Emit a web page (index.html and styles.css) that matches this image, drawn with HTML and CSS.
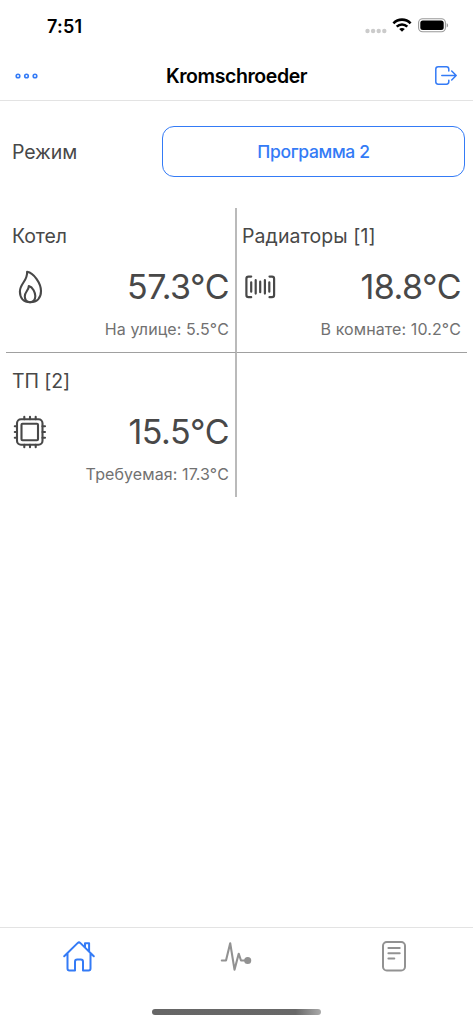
FILE: index.html
```html
<!DOCTYPE html>
<html lang="ru">
<head>
<meta charset="utf-8">
<title>Kromschroeder</title>
<link rel="stylesheet" href="styles.css">
</head>
<body>
<div class="app">
  <div class="status">
    <span class="time">7:51</span>
    <div class="indicators">
      <svg class="signal" width="22" height="6" viewBox="0 0 22 6" fill="#cbcbcb"><circle cx="2.5" cy="3" r="2.2"/><circle cx="8.1" cy="3" r="2.2"/><circle cx="13.7" cy="3" r="2.2"/><circle cx="19.3" cy="3" r="2.2"/></svg>
      <svg class="wifi" width="20" height="14" viewBox="0 0 20 14" fill="none" stroke="#000" stroke-width="2.6"><path d="M1.4 5.3C6.2.4 13.8.4 18.6 5.3"/><path d="M4.7 8.6C7.7 5.7 12.3 5.7 15.3 8.6"/><path d="M7.2 11C8.8 9.5 11.2 9.5 12.8 11L10 13.7Z" fill="#000" stroke="none"/></svg>
      <svg class="battery" width="31" height="15" viewBox="0 0 31 15"><rect x=".6" y=".8" width="26.8" height="13" rx="4" fill="none" stroke="#999" stroke-width="1.1"/><rect x="2.3" y="2.5" width="23.4" height="9.6" rx="2.5"/><path d="M28.7 5C30.5 5.8 30.5 8.8 28.7 9.6Z" fill="#999"/></svg>
    </div>
  </div>
  <header class="nav">
    <svg class="more" width="24" height="8" viewBox="0 0 24 8" fill="none" stroke="#347bf6" stroke-width="1.6"><circle cx="3" cy="4" r="1.8"/><circle cx="11.5" cy="4" r="1.8"/><circle cx="20" cy="4" r="1.8"/></svg>
    <h1 class="title">Kromschroeder</h1>
    <svg class="exit" width="24" height="22" viewBox="0 0 24 22" fill="none" stroke="#347bf6" stroke-width="1.5" stroke-linecap="round" stroke-linejoin="round"><path d="M14.8 6V4.2Q14.8 1.8 12.4 1.8H4.2Q1.8 1.8 1.8 4.2V16.8Q1.8 19.2 4.2 19.2H12.4Q14.8 19.2 14.8 16.8V15.2M7.8 10.5H22.2M17.7 6L22.2 10.5L17.7 15"/></svg>
  </header>
  <main class="content">
    <div class="mode">
      <span class="label">Режим</span>
      <button class="program"><span>Программа 2</span></button>
    </div>
    <div class="grid">
      <section class="cell right-line bottom-line">
        <h2 class="label">Котел</h2>
        <div class="reading">
          <svg class="icon" width="36" height="36" viewBox="0 0 36 36" fill="none" stroke="#484848" stroke-width="2.1" stroke-linejoin="round"><path d="M15.1 2.8C22.1 4.1 29 14.5 29 22.1C29 29.1 25 33.2 18.2 33.2C11.4 33.2 7.9 28.8 7.9 22.5C7.9 14.5 15.8 11.8 15.1 2.8Z"/><path d="M16.8 17C21 18.1 23.3 23.8 23.3 27.1C23.3 31 21.6 33.2 18 33.2C14.5 33.2 12.8 30.7 12.8 27.3C12.8 22.7 16.8 21.4 16.8 17Z"/></svg>
          <span class="temp">57.3°C</span>
        </div>
        <p class="note">На улице: 5.5°C</p>
      </section>
      <section class="cell second bottom-line">
        <h2 class="label wide">Радиаторы [1]</h2>
        <div class="reading">
          <svg class="icon" width="36" height="36" viewBox="0 0 36 36" fill="none" stroke="#484848" stroke-width="2.2" stroke-linecap="round" stroke-linejoin="round"><path d="M9.2 7.6H6.5Q4.4 7.6 4.4 9.7V26.1Q4.4 28.2 6.5 28.2H9.2M27.5 7.6H30Q32.1 7.6 32.1 9.7V26.1Q32.1 28.2 30 28.2H27.5M9.2 13.3V22.7M13.7 11.2V24.6M18.2 12.7V23.2M22.9 11.2V24.6M27.3 13.3V22.7"/></svg>
          <span class="temp">18.8°C</span>
        </div>
        <p class="note">В комнате: 10.2°C</p>
      </section>
      <section class="cell right-line">
        <h2 class="label">ТП [2]</h2>
        <div class="reading">
          <svg class="icon" width="36" height="36" viewBox="0 0 36 36" fill="none" stroke="#484848" stroke-width="2.1" stroke-linecap="round" stroke-linejoin="round"><rect x="5" y="5.3" width="25.5" height="25.5" rx="4"/><rect x="9.5" y="9.8" width="16.5" height="16.5" rx="1"/><path d="M12.3 5.3V2.8M18 5.3V2.8M23.7 5.3V2.8M12.3 30.8V33.2M18 30.8V33.2M23.7 30.8V33.2M5 12.3H2.8M5 18H2.8M5 23.7H2.8M30.5 12.3H33M30.5 18H33M30.5 23.7H33"/></svg>
          <span class="temp">15.5°C</span>
        </div>
        <p class="note">Требуемая: 17.3°C</p>
      </section>
    </div>
  </main>
  <nav class="tabs">
    <a class="tab"><svg width="34" height="34" viewBox="0 0 34 34" fill="none" stroke="#347bf6" stroke-width="2" stroke-linecap="round" stroke-linejoin="round"><path d="M2.2 17.2L15.8 3.9Q17 2.8 18.2 3.9L31.8 17.2M5.5 14.5V29.6Q5.5 31.5 7.4 31.5H13V22.8Q13 20.5 15.2 20.5H18.8Q21 20.5 21 22.8V31.5H26.6Q28.5 31.5 28.5 29.6V14.5M23 8.2V4.2H27.1V12.4"/></svg></a>
    <a class="tab"><svg width="34" height="34" viewBox="0 0 34 34" fill="none" stroke="#929292" stroke-width="2.1" stroke-linecap="round" stroke-linejoin="round"><path d="M2.8 21.5H7L11.2 4.2L15.5 30.7L19.7 14.7L22 21.5H28"/><circle cx="28.7" cy="21.5" r="2.5" fill="#929292"/></svg></a>
    <a class="tab"><svg width="34" height="34" viewBox="0 0 34 34" fill="none" stroke="#929292" stroke-width="2" stroke-linecap="round" stroke-linejoin="round"><rect x="6" y="3" width="22" height="28.5" rx="3.8"/><path d="M11.4 8.9H22.7M11.4 14.2H22.7M11.4 19.5H17.3"/></svg></a>
  </nav>
  <div class="home-bar"></div>
</div>
</body>
</html>
```
FILE: styles.css
```css
* { box-sizing: border-box; }
body { margin: 0; background: #fff; font-family: Inter, "Liberation Sans", sans-serif; color: #484848; }
.app { width: 473px; height: 1024px; display: flex; flex-direction: column; overflow: hidden; }
.status { height: 52px; flex: none; display: flex; justify-content: space-between; padding: 16px 24px 0 47px; }
.time { font-size: 18px; line-height: 22px; font-weight: 600; letter-spacing: .2px; color: #000; }
.indicators { display: flex; align-items: flex-start; }
.signal { margin: 12px 5px 0 0; }
.wifi { margin: 2px 6px 0 0; }
.battery { margin-top: 2px; }
.nav { height: 49px; flex: none; display: grid; grid-template-columns: 24px 1fr 24px; align-items: center; padding: 0 15px; border-bottom: 1px solid #e3e3e3; }
.exit { justify-self: end; }
.title { margin: 0; font-size: 19.5px; line-height: 24px; font-weight: 600; letter-spacing: -.42px; text-align: center; color: #000; }
.content { flex: 1; padding: 25px 6px 0; }
.mode { height: 51px; display: flex; align-items: center; justify-content: space-between; padding: 0 2px 0 6px; }
.label { margin: 0; font-size: 19.5px; line-height: 24px; font-weight: 400; letter-spacing: -.1px; white-space: nowrap; }
.wide { letter-spacing: .1px; }
.program { width: 303px; height: 51px; border: 1px solid #347bf6; border-radius: 12px; background: #fff; color: #347bf6; font: 500 17.5px/24px Inter, sans-serif; letter-spacing: -.35px; padding: 0; }
.grid { display: grid; grid-template-columns: 231px 230px; grid-template-rows: 145px 144px; margin-top: 31px; }
.cell { padding: 16px 6px 0; }
.second { padding-left: 5px; }
.right-line { border-right: 2px solid #bababa; }
.bottom-line { border-bottom: 1px solid #a0a0a0; }
.reading { display: flex; justify-content: space-between; align-items: center; height: 36px; margin-top: 21px; }
.temp { font-size: 34px; line-height: 42px; letter-spacing: -.5px; white-space: nowrap; }
.note { margin: 14px 0 0; font-size: 16px; line-height: 20px; letter-spacing: .1px; color: #717171; text-align: right; white-space: nowrap; }
.tabs { flex: none; height: 73px; display: grid; grid-template-columns: repeat(3, 1fr); border-top: 1px solid #e3e3e3; padding-top: 11px; }
.tab { display: flex; justify-content: center; }
.home-bar { flex: none; width: 169px; height: 6px; border-radius: 3px; margin: 9px auto 9px 152px; background: linear-gradient(90deg, #666, #686868 85%, #aaa); }
```
